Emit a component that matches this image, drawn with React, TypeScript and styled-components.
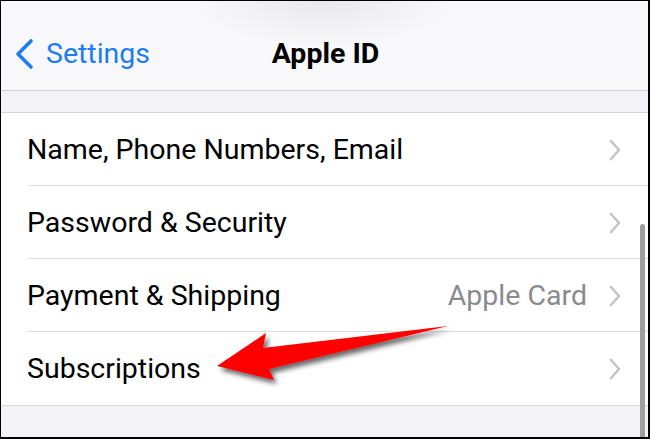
import React from "react";
import styled, { createGlobalStyle } from "styled-components";

const Global = createGlobalStyle`
  html, body { margin: 0; padding: 0; background: #fff; }
  body { font-family: Roboto, "Liberation Sans", Arial, sans-serif; }
`;

const Frame = styled.div`
  position: relative;
  width: 650px;
  height: 439px;
  box-sizing: border-box;
  border-top: 1px solid #000;
  border-left: 1px solid #000;
  border-right: 2px solid #000;
  border-bottom: 2px solid #000;
  overflow: hidden;
  display: flex;
  flex-direction: column;
  background: #f2f2f7;
`;

const NavBar = styled.header`
  height: 90px;
  flex: none;
  display: grid;
  grid-template-columns: 1fr auto 1fr;
  align-items: center;
  padding-top: 16px;
  box-sizing: border-box;
  background:
    radial-gradient(ellipse 130px 45px at 322px 0px, rgba(214, 214, 218, 0.45), rgba(214, 214, 218, 0) 100%),
    #f8f8fa;
  border-bottom: 1px solid #cfcfd3;
`;

const BackButton = styled.div`
  display: flex;
  align-items: center;
  gap: 12px;
  padding-left: 13px;
  color: #1b7cf4;
  font-size: 28.5px;
`;

const Title = styled.div`
  font-size: 28.5px;
  font-weight: 700;
  color: #000;
  padding-left: 2px;
`;

const Gap = styled.div<{ $h: number }>`
  height: ${(p) => p.$h}px;
  flex: none;
  background: #f2f2f7;
  border-bottom: 1px solid #d6d6da;
`;

const List = styled.div`
  background: #fff;
  flex: none;
  border-bottom: 1px solid #d8d8dc;
`;

const Row = styled.div<{ $last?: boolean }>`
  position: relative;
  height: 73px;
  display: flex;
  align-items: center;
  padding: 0 27px 0 26px;
  box-sizing: border-box;
  &::after {
    content: "";
    display: ${(p) => (p.$last ? "none" : "block")};
    position: absolute;
    left: 27px;
    right: 0;
    bottom: 0;
    height: 1px;
    background: #dcdce0;
  }
`;

const Label = styled.span`
  flex: 1;
  font-size: 28.5px;
  color: #000;
`;

const Value = styled.span`
  font-size: 28.5px;
  color: #8a8a8e;
  margin-right: 22px;
`;

const Rest = styled.div`
  flex: 1;
  background: #f2f2f7;
`;

const ScrollBar = styled.div`
  position: absolute;
  left: 639px;
  top: 223px;
  width: 5px;
  bottom: -4px;
  border-radius: 3px;
  background: #9e9e9f;
`;

const ArrowLayer = styled.svg`
  position: absolute;
  left: 0;
  top: 0;
  pointer-events: none;
`;

const Chevron = () => (
  <svg width="12" height="22" viewBox="0 0 12 22">
    <path d="M2 2 L10 11 L2 20" fill="none" stroke="#c4c4c7" strokeWidth="2.6" strokeLinecap="round" strokeLinejoin="round" />
  </svg>
);

const BackChevron = () => (
  <svg width="20" height="32" viewBox="0 0 20 32">
    <path d="M17 3 L4 16 L17 29" fill="none" stroke="#1b7cf4" strokeWidth="3.6" strokeLinecap="round" strokeLinejoin="round" />
  </svg>
);

const rows = [
  { label: "Name, Phone Numbers, Email" },
  { label: "Password & Security" },
  { label: "Payment & Shipping", value: "Apple Card" },
  { label: "Subscriptions" },
];

export default function App() {
  return (
    <>
      <Global />
      <Frame>
        <NavBar>
          <BackButton>
            <BackChevron />
            <span>Settings</span>
          </BackButton>
          <Title>Apple ID</Title>
          <div />
        </NavBar>
        <Gap $h={21} />
        <List>
          {rows.map((r, i) => (
            <Row key={r.label} $last={i === rows.length - 1}>
              <Label>{r.label}</Label>
              {r.value && <Value>{r.value}</Value>}
              <Chevron />
            </Row>
          ))}
        </List>
        <Rest />
        <ScrollBar />
        <ArrowLayer width="650" height="439" viewBox="0 0 650 439">
          <defs>
            <filter id="sh" x="-20%" y="-50%" width="140%" height="200%">
              <feDropShadow dx="3" dy="4" stdDeviation="2.5" floodColor="#000" floodOpacity="0.6" />
            </filter>
          </defs>
          <polygon
            points="216,365 265,332 262,347 447,325 268,368 273,379"
            fill="#ff0000"
            filter="url(#sh)"
          />
        </ArrowLayer>
      </Frame>
    </>
  );
}
